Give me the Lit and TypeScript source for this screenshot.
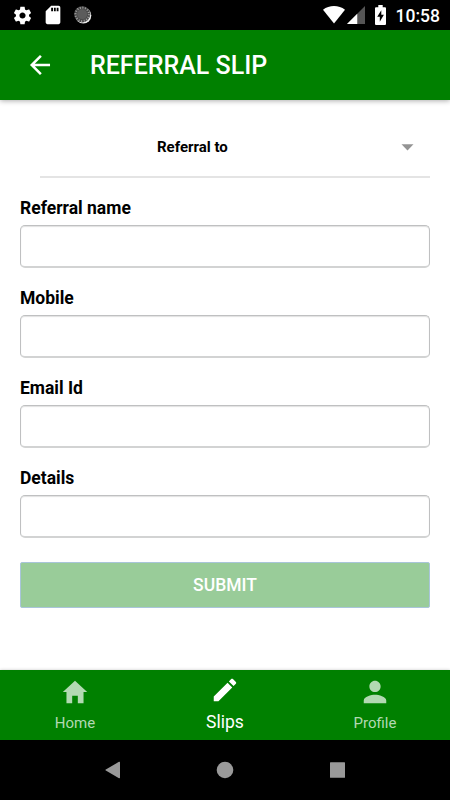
import { LitElement, html, css, svg } from "lit";
import { customElement } from "lit/decorators.js";
import { classMap } from "lit/directives/class-map.js";

const tabs = [
  {
    label: "Home",
    active: false,
    icon: svg`<path d="M208 448V320h96v128h97.6V256H464L256 64 48 256h62.4v192z"/>`,
  },
  {
    label: "Slips",
    active: true,
    icon: svg`<path d="M64 368v80h80l235.727-235.729-79.999-79.998L64 368zm377.602-217.602c8.531-8.531 8.531-21.334 0-29.865l-50.135-50.135c-8.531-8.531-21.334-8.531-29.865 0l-39.468 39.469 79.999 79.998 39.469-39.467z"/>`,
  },
  {
    label: "Profile",
    active: false,
    icon: svg`<path d="M256 256c52.805 0 96-43.201 96-96s-43.195-96-96-96-96 43.201-96 96 43.195 96 96 96zm0 48c-63.598 0-192 32.402-192 96v48h384v-48c0-63.598-128.402-96-192-96z"/>`,
  },
];

const fields = ["Referral name", "Mobile", "Email Id", "Details"];

@customElement("app-root")
export class AppRoot extends LitElement {
  static styles = css`
    :host {
      display: flex;
      flex-direction: column;
      height: 800px;
      width: 450px;
      overflow: hidden;
      background: #fff;
      color: #000;
      font-family: Roboto, sans-serif;
    }
    * {
      box-sizing: border-box;
    }
    svg {
      display: block;
      flex: none;
    }
    .status {
      flex: none;
      height: 30px;
      background: #000;
      display: flex;
      align-items: center;
      padding: 0 10px 0 12px;
      color: #fff;
    }
    .spacer {
      flex: 1;
    }
    .sd {
      margin-left: 8.5px;
    }
    .sync {
      margin-left: 10px;
    }
    .signal {
      margin-left: 2px;
    }
    .battery {
      margin-left: 10px;
    }
    .clock {
      margin-left: 9px;
      font-size: 17.5px;
      font-weight: 500;
      line-height: 30px;
      padding-top: 1px;
      width: 45px;
      text-align: right;
      white-space: nowrap;
    }
    .header {
      flex: none;
      height: 70px;
      background: #008000;
      color: #fff;
      display: flex;
      align-items: center;
      padding-left: 25px;
      gap: 35px;
      box-shadow: 0 1px 5px rgba(0, 0, 0, 0.32);
    }
    .title {
      margin: 0;
      font-size: 25px;
      font-weight: 500;
      white-space: nowrap;
    }
    .content {
      flex: 1;
      padding: 20px 20px 0;
    }
    .select {
      height: 58px;
      margin-left: 20px;
      border-bottom: 2px solid #e4e4e4;
      display: flex;
      align-items: center;
      padding: 0 16px 2px 0;
    }
    .select-label {
      flex: 1;
      padding-left: 117px;
      font-size: 15px;
      font-weight: 700;
      line-height: 20px;
    }
    .field {
      display: block;
      height: 90px;
      padding-top: 18px;
    }
    .label {
      display: block;
      font-size: 17.5px;
      font-weight: 700;
      line-height: 24px;
      margin-bottom: 5px;
    }
    .input {
      display: block;
      width: 100%;
      height: 43px;
      border: 1px solid #bfc0c1;
      border-bottom: 2px solid #d2d3d3;
      border-radius: 5px;
      background: #fff;
      box-shadow: inset 0 1px 1px #e2e2e2;
      outline: none;
      padding: 0 10px;
      font: 17.5px Roboto, sans-serif;
    }
    .submit {
      display: block;
      width: 100%;
      height: 46px;
      margin-top: 24px;
      padding: 0;
      border: 1px solid #a9c5da;
      border-radius: 2px;
      background: #99cc99;
      color: #fff;
      font: 500 17.5px Roboto, sans-serif;
    }
    .tabs {
      flex: none;
      height: 70px;
      background: #008000;
      display: grid;
      grid-template-columns: repeat(3, 1fr);
      box-shadow: 0 0 3px rgba(0, 0, 0, 0.22);
    }
    .tab {
      display: flex;
      flex-direction: column;
      align-items: center;
      color: #b2d9b2;
      padding-top: 7px;
      font-size: 15px;
      line-height: 20px;
    }
    .tab-text {
      margin-top: 6px;
    }
    .tab.active {
      color: #fff;
      padding-top: 5px;
      font-size: 17.5px;
    }
    .active .tab-text {
      margin-top: 7px;
    }
    .nav {
      flex: none;
      height: 60px;
      background: #000;
      display: flex;
      align-items: center;
      justify-content: center;
      gap: 82.5px;
    }
  `;

  render() {
    return html`
      <div class="status">
        <svg width="21" height="21" viewBox="0 0 24 24" fill="#fff">
          <path d="M19.43 12.98c.04-.32.07-.64.07-.98s-.03-.66-.07-.98l2.11-1.65c.19-.15.24-.42.12-.64l-2-3.46c-.12-.22-.39-.3-.61-.22l-2.49 1c-.52-.4-1.08-.73-1.69-.98l-.38-2.65C14.46 2.18 14.25 2 14 2h-4c-.25 0-.46.18-.49.42l-.38 2.65c-.61.25-1.17.59-1.69.98l-2.49-1c-.23-.09-.49 0-.61.22l-2 3.46c-.13.22-.07.49.12.64l2.11 1.65c-.04.32-.07.65-.07.98s.03.66.07.98l-2.11 1.65c-.19.15-.24.42-.12.64l2 3.46c.12.22.39.3.61.22l2.49-1c.52.4 1.08.73 1.69.98l.38 2.65c.03.24.24.42.49.42h4c.25 0 .46-.18.49-.42l.38-2.65c.61-.25 1.17-.59 1.69-.98l2.49 1c.23.09.49 0 .61-.22l2-3.46c.12-.22.07-.49-.12-.64l-2.11-1.65zM12 15.500c-1.930 0-3.500-1.570-3.500-3.500s1.570-3.500 3.500-3.500 3.500 1.570 3.500 3.500-1.570 3.500-3.500 3.500z"/>
        </svg>
        <svg class="sd" width="22" height="22" viewBox="0 0 24 24" fill="#fff">
          <path d="M18 2h-8L4.020 8 4 20c0 1.100.900 2 2 2h12c1.100 0 2-.900 2-2V4c0-1.100-.900-2-2-2zm-6 6h-2V4h2v4zm3 0h-2V4h2v4zm3 0h-2V4h2v4z"/>
        </svg>
        <svg class="sync" width="18" height="18" viewBox="0 0 18 18">
          <circle cx="9.300" cy="9.500" r="8" fill="#eee"/>
          <circle cx="8.200" cy="8.300" r="8.100" fill="#484848"/>
          <circle cx="8.200" cy="8.300" r="6.700" fill="none" stroke="#a0a0a0" stroke-width="2" stroke-dasharray="1 1.631"/>
          <circle cx="8.200" cy="8.300" r="5" fill="#5c5c5c"/>
        </svg>
        <span class="spacer"></span>
        <svg width="22" height="18" viewBox="0 0 22 18">
          <path d="M0 3.700C6.200-1.200 15.800-1.200 22 3.700L11 17.500z" fill="#fff"/>
        </svg>
        <svg class="signal" width="18" height="18" viewBox="0 0 17 17">
          <path d="M17 0v17H0z" fill="#555"/>
          <path d="M9.700 7.300V17H0z" fill="#fff"/>
        </svg>
        <svg class="battery" width="11" height="20" viewBox="0 0 11 20">
          <path d="M1 2.200h2.300V0h4.400v2.200H10q1 0 1 1V19q0 1-1 1H1q-1 0-1-1V3.200q0-1 1-1z" fill="#fff"/>
          <path d="M6.300 5.200 2.200 11.800h2.600v4.900L8.900 9.800H6.300z" fill="#000"/>
        </svg>
        <span class="clock">10:58</span>
      </div>
      <header class="header">
        <svg width="30" height="30" viewBox="0 0 512 512" fill="#fff">
          <path d="M427 234.625H167.296l119.702-119.702L256 85 85 256l171 171 29.922-29.924-118.626-119.701H427v-42.750z"/>
        </svg>
        <h1 class="title">REFERRAL SLIP</h1>
      </header>
      <main class="content">
        <div class="select">
          <span class="select-label">Referral to</span>
          <svg width="13" height="7" viewBox="0 0 13 7"><path d="M.5.300h12L6.500 6.500z" fill="#949494"/></svg>
        </div>
        ${fields.map(
          (name) => html`<label class="field">
            <span class="label">${name}</span>
            <input class="input" type="text" />
          </label>`
        )}
        <button class="submit">SUBMIT</button>
      </main>
      <nav class="tabs">
        ${tabs.map(
          (tab) => html`<div class=${classMap({ tab: true, active: tab.active })}>
            <svg width="30" height="30" viewBox="0 0 512 512" fill="currentColor">${tab.icon}</svg>
            <span class="tab-text">${tab.label}</span>
          </div>`
        )}
      </nav>
      <div class="nav">
        <svg width="30" height="30" viewBox="0 0 30 30" fill="#999"><path d="M7.800 14.400 21 6.800q1-.400 1 .600v15.200q0 1-1 .600L7.800 15.600q-.900-.600 0-1.200z"/></svg>
        <svg width="30" height="30" viewBox="0 0 30 30" fill="#999"><circle cx="15" cy="15" r="8.300"/></svg>
        <svg width="30" height="30" viewBox="0 0 30 30" fill="#999"><rect x="7" y="7.300" width="15" height="15.500" rx=".5"/></svg>
      </div>
    `;
  }
}
